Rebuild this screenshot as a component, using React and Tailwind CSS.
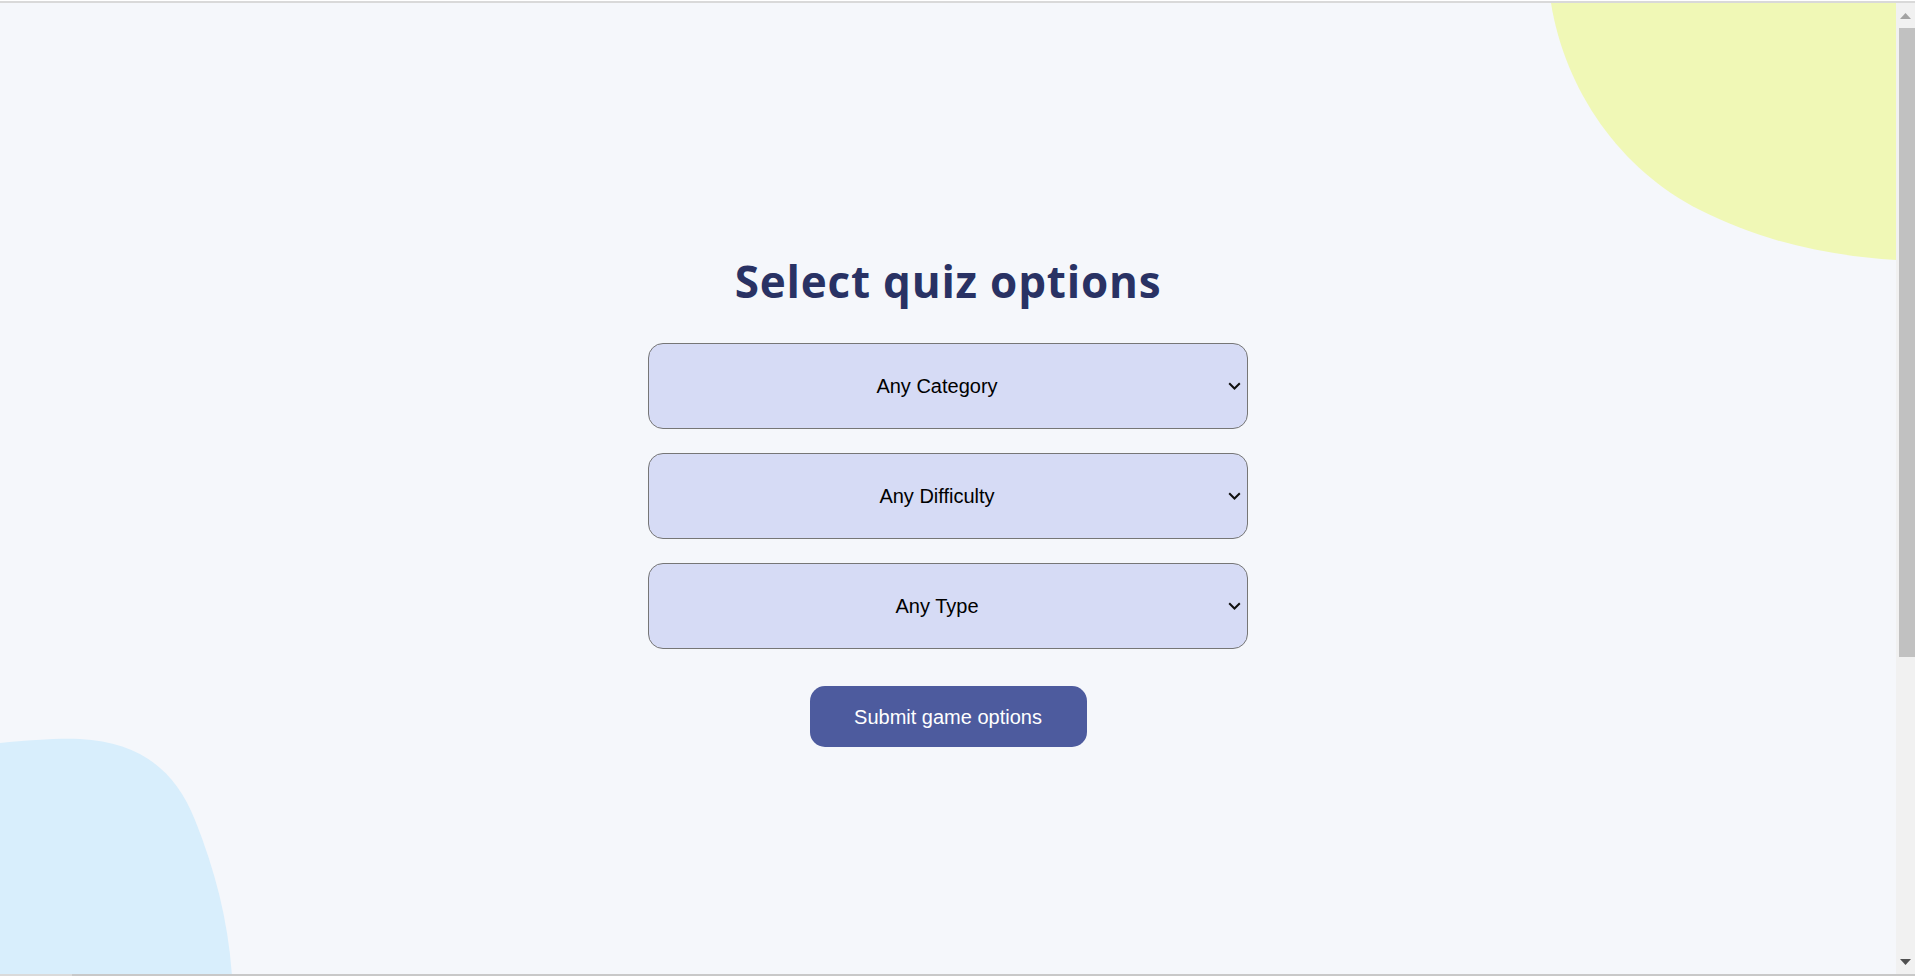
import React from "react";

function Chevron() {
  return (
    <svg
      className="absolute right-[7px] top-1/2 -translate-y-1/2 pointer-events-none"
      width="13"
      height="8"
      viewBox="0 0 13 8"
    >
      <polyline points="1.2,1.2 6.5,6.5 11.8,1.2" fill="none" stroke="#111" strokeWidth="2" />
    </svg>
  );
}

function Select({ label }) {
  return (
    <div className="relative w-[600px] h-[86px]">
      <select
        defaultValue={label}
        className="appearance-none w-full h-full bg-[#D6DBF5] border border-[#767676] rounded-[15px] pl-0 pr-[22px] text-center [text-align-last:center] text-[20px] text-black outline-none font-['Liberation_Sans',Arial,sans-serif]"
      >
        <option>{label}</option>
      </select>
      <Chevron />
    </div>
  );
}

export default function App() {
  return (
    <div className="w-[1915px] h-[976px] flex flex-col bg-white overflow-hidden">
      <div className="h-[1px] bg-white" />
      <div className="h-[2px] bg-[#d9d9d9]" />
      <div className="flex flex-1 min-h-0">
        <main className="relative flex-1 bg-[#F5F7FB] overflow-hidden">
          <svg
            className="absolute inset-0 pointer-events-none"
            width="1896"
            height="971"
            viewBox="0 0 1896 971"
          >
            <g transform="translate(0,-3)">
              <path
                d="M1551 3 C1565 90 1620 170 1700 210 C1760 240 1820 255 1896 260 L1896 3 Z"
                fill="#F0F8B6"
              />
              <path
                d="M0 743 C30 740 60 738 80 739 C140 742 175 770 195 820 C215 870 228 920 232 976 L0 976 Z"
                fill="#D8EEFC"
              />
            </g>
          </svg>
          <div className="relative flex flex-col items-center pt-[256px]">
            <h1 className="text-[44px] leading-[44px] font-bold tracking-[0.8px] text-[#293264] font-['Open_Sans','Noto_Sans',sans-serif]">
              Select quiz options
            </h1>
            <div className="mt-[40px] flex flex-col gap-[24px]">
              <Select label="Any Category" />
              <Select label="Any Difficulty" />
              <Select label="Any Type" />
            </div>
            <button className="mt-[37px] w-[277px] h-[61px] rounded-[15px] bg-[#4D5B9E] text-white text-[20px] font-['Liberation_Sans',Arial,sans-serif]">
              Submit game options
            </button>
          </div>
        </main>
        <div className="w-[19px] bg-[#f1f1f1] flex flex-col items-center">
          <div className="h-[25px] w-full flex items-center justify-center">
            <svg width="11" height="6" viewBox="0 0 11 6">
              <polygon points="0,6 5.5,0 11,6" fill="#a3a3a3" />
            </svg>
          </div>
          <div className="w-[16px] ml-[2px] h-[629px] bg-[#c1c1c1]" />
          <div className="flex-1" />
          <div className="h-[25px] w-full flex items-center justify-center">
            <svg width="11" height="6" viewBox="0 0 11 6">
              <polygon points="0,0 5.5,6 11,0" fill="#505050" />
            </svg>
          </div>
        </div>
      </div>
      <div className="h-[2px] flex">
        <div className="w-[72px] bg-[#dadada]" />
        <div className="flex-1 bg-[#c8c8c8]" />
      </div>
    </div>
  );
}
